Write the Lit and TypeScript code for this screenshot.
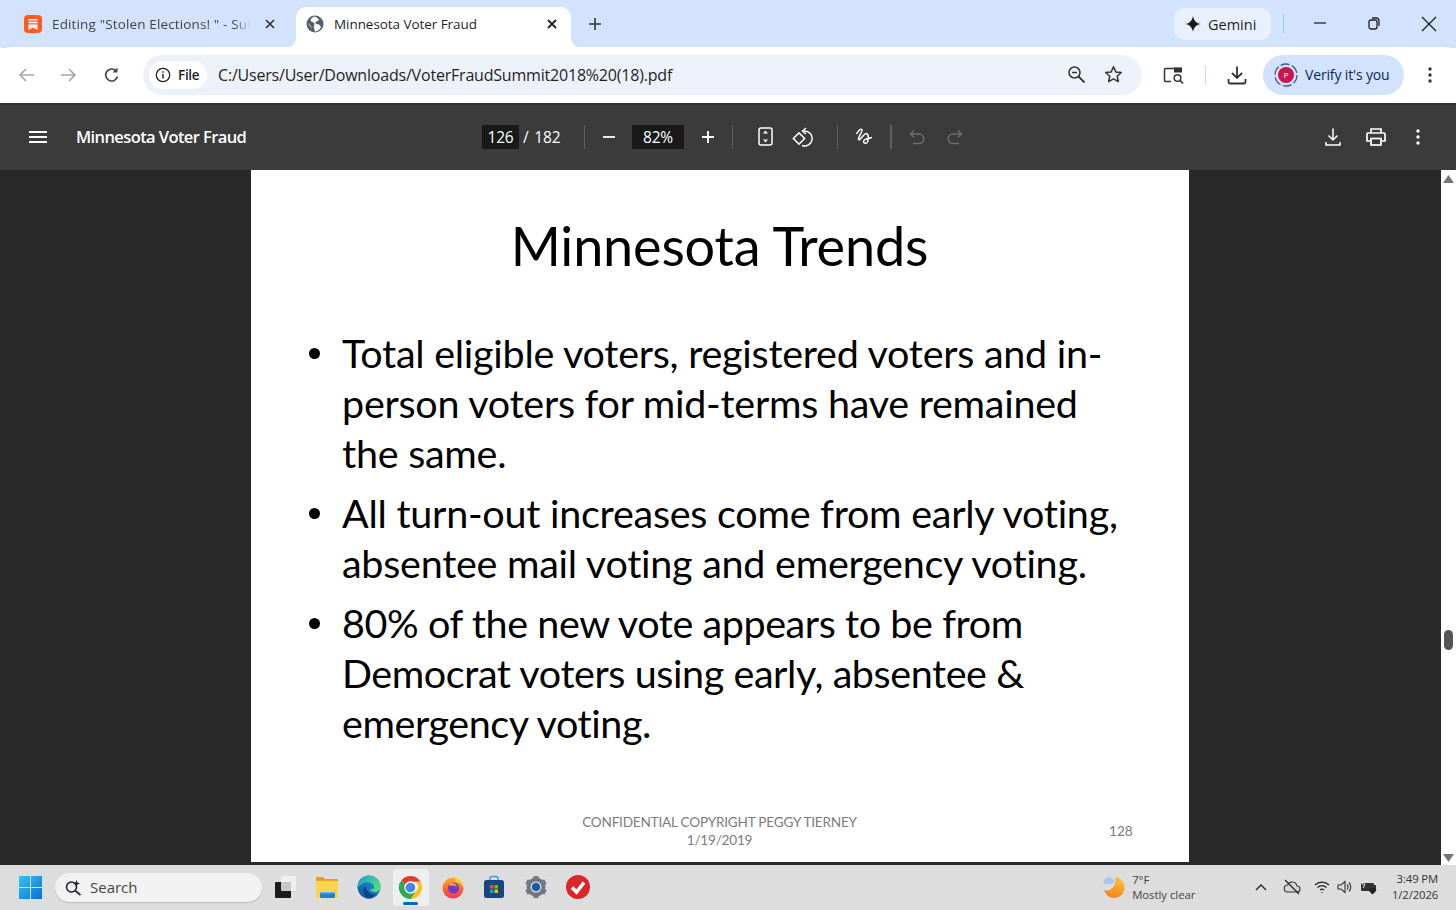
import { LitElement, html, css, svg } from "lit";
import { customElement } from "lit/decorators.js";

const ic = (w: number, h: number, body: unknown, cls = "") =>
  html`<svg class="ic ${cls}" width=${w} height=${h} viewBox="0 0 ${w} ${h}" fill="none">${body}</svg>`;

@customElement("app-root")
export class AppRoot extends LitElement {
  static styles = css`
    :host { display: flex; flex-direction: column; width: 1456px; height: 910px; overflow: hidden; font-family: "Open Sans", "Noto Sans", sans-serif; }
    .ic { display: block; flex: none; }
    .tabs { height: 48px; flex: none; background: #d3e3fd; display: flex; align-items: flex-start; }
    .tab1 { width: 296px; height: 48px; display: flex; align-items: center; padding: 0 0 0 23px; box-sizing: border-box; color: #444; font-size: 13.5px; letter-spacing: 0.14px; }
    .tab1 .t { margin-left: 9px; width: 198px; overflow: hidden; white-space: nowrap; -webkit-mask-image: linear-gradient(90deg,#000 92%,transparent); mask-image: linear-gradient(90deg,#000 92%,transparent); }
    .tab1 svg:last-child { margin-left: 13px; }
    .tab2 { margin-top: 7px; width: 275px; height: 41px; background: #fff; border-radius: 10px 10px 0 0; display: flex; align-items: center; box-sizing: border-box; padding: 0 0 7px 10px; color: #1f1f1f; font-size: 13.5px; letter-spacing: -0.06px; flex: none; position: relative; }
    .tab2::before, .tab2::after { content: ""; position: absolute; bottom: 0; width: 10px; height: 10px; }
    .tab2::before { left: -10px; background: radial-gradient(circle at 0 0, transparent 9.5px, #fff 10px); }
    .tab2::after { right: -10px; background: radial-gradient(circle at 100% 0, transparent 9.5px, #fff 10px); }
    .tab2 .t { margin-left: 10px; width: 211px; white-space: nowrap; }
    .plus { margin-left: 17px; margin-top: 17px; }
    .tabs .sp { flex: 1; }
    .gem { margin-top: 8px; width: 97px; height: 32px; background: #e9f0fd; border-radius: 10px; display: flex; align-items: center; padding-left: 10px; box-sizing: border-box; font-size: 14.5px; color: #1f1f1f; gap: 6px; letter-spacing: 0; }
    .vbar { width: 1px; height: 19px; background: #a8c7fa; margin: 14px 0 0 12px; }
    .win { display: flex; margin-top: 16px; margin-left: 29px; gap: 40px; margin-right: 19px; }
    .bar { height: 56px; flex: none; background: #fff; border-radius: 10px 10px 0 0; display: flex; align-items: center; margin-top: -1px; position: relative; }
    .nav { display: flex; align-items: center; padding-left: 18px; width: 143px; box-sizing: border-box; }
    .nav svg:nth-child(2) { margin-left: 23px; }
    .nav svg:nth-child(3) { margin-left: 26px; }
    .omni { width: 999px; height: 40px; background: #edf2fa; border-radius: 20px; display: flex; align-items: center; padding-left: 6px; box-sizing: border-box; }
    .chip { width: 58px; height: 28px; background: #fff; border-radius: 14px; display: flex; align-items: center; padding-left: 6px; gap: 7px; box-sizing: border-box; font-size: 13.5px; font-weight: 600; color: #1f1f1f; letter-spacing: -0.3px; }
    .url { margin-left: 11px; padding-bottom: 1px; font-size: 16px; color: #1f1f1f; letter-spacing: -0.2px; flex: 1; white-space: nowrap; }
    .omni .z { margin-right: 18px; margin-bottom: 2px; }
    .omni .star { margin-right: 19px; margin-bottom: 2px; }
    .bar .lens { margin-left: 21px; }
    .hbar { width: 1px; height: 19px; background: #c9daf8; margin: 1px 21px 0 21px; }
    .ver { margin-left: 16px; width: 141px; height: 40px; border-radius: 20px; background: #d3e3fd; display: flex; align-items: center; padding-left: 11px; box-sizing: border-box; font-size: 14px; color: #0b2a57; gap: 7px; letter-spacing: -0.15px; padding-bottom: 1px; }
    .bar .dots { margin-left: 24px; }
    .pdfbar { height: 67px; flex: none; background: #3b3b3b; color: #fff; display: flex; align-items: center; font-size: 16px; box-shadow: inset 0 2px 0 #333; }
    .menu { margin-left: 29px; }
    .ttl { margin-left: 29px; width: 406px; font-weight: 600; font-size: 16.5px; letter-spacing: -0.6px; white-space: nowrap; }
    .box { background: #191919; height: 24px; display: flex; align-items: center; justify-content: center; font-size: 15.5px; letter-spacing: -0.2px; }
    .pg { width: 37px; }
    .of { margin-left: 4px; font-size: 15.5px; width: 61px; letter-spacing: -0.2px; word-spacing: 2px; white-space: pre; }
    .sep { width: 1px; height: 24px; background: #5f5f5f; flex: none; }
    .zm { width: 52px; }
    .pdfbar .grp { display: flex; align-items: center; }
    .view { flex: 1; min-height: 0; background: #282828; display: flex; position: relative; }
    .page { margin-left: 251px; width: 938px; height: 692px; background: #fff; color: #000; font-family: "Lato", sans-serif; position: relative; display: flex; flex-direction: column; align-items: center; }
    .h { font-size: 54px; line-height: 66px; margin-top: 43px; letter-spacing: -0.17px; white-space: nowrap; margin-left: -1px; }
    ul { list-style: none; margin: 49px 0 0 0; padding: 0 0 0 63px; align-self: stretch; font-size: 39.5px; line-height: 50px; letter-spacing: -0.26px; }
    li { display: flex; margin-bottom: 10px; white-space: nowrap; }
    li.p3 { letter-spacing: -0.42px; }
    li::before { content: ""; width: 11px; height: 11px; border-radius: 50%; background: #000; margin: 20px 17px 0 -5px; flex: none; }
    li span { margin-left: 5px; }
    .fl { position: absolute; left: 0; right: 0; top: 643px; text-align: center; font-size: 13.6px; line-height: 18px; color: #7c7c7c; letter-spacing: -0.22px; margin-left: -1px; }
    .num { position: absolute; left: 858px; top: 652px; font-size: 13.6px; line-height: 18px; color: #7c7c7c; }
    .scroll { position: absolute; right: 0; top: 0; bottom: 0; width: 15px; background: #fff; }
    .up, .dn { position: absolute; left: 2px; }
    .up { top: 5px; } .dn { bottom: 3px; }
    .thumb { position: absolute; left: 3px; top: 460px; width: 9px; height: 20px; border-radius: 5px; background: #555; }
    .task { height: 45px; flex: none; background: #dddddd; display: flex; align-items: center; position: relative; font-family: "Open Sans", sans-serif; box-sizing: border-box; padding-bottom: 1px; }
    .start { margin-left: 19px; }
    .search { margin-left: 13px; width: 207px; height: 29px; border-radius: 15px; background: #f2f2f2; box-shadow: 0 1px 1px #bbb; display: flex; align-items: center; padding-left: 10px; gap: 8px; box-sizing: border-box; font-size: 15px; color: #444; }
    .apps { display: flex; align-items: center; margin-left: 2px; }
    .app { width: 41.9px; height: 37px; display: flex; align-items: center; justify-content: center; position: relative; }
    .app.on::before { content: ""; position: absolute; left: 3px; right: 3px; top: 0; bottom: 0; background: #efefef; border-radius: 4px; }
    .app.on svg { position: relative; }
    .app.on::after { content: ""; position: absolute; left: 13px; bottom: 1px; width: 15px; height: 3px; border-radius: 2px; background: #0067c0; }
    .wx { margin-left: 503px; }
    .wxt { margin-left: 7px; font-size: 11.3px; line-height: 15px; color: #444; width: 122px; margin-top: -1px; }
    .tray { display: flex; align-items: center; }
    .clock { margin-left: 11px; width: 50px; text-align: right; font-size: 11.3px; line-height: 15.5px; color: #333; letter-spacing: -0.1px; margin-top: -1px; }
  `;

  render() {
    const g = "#444746";
    const stroke = (d: string, c = g, w = 1.6) => svg`<path d=${d} stroke=${c} stroke-width=${w} fill="none"/>`;
    return html`
      <div class="tabs">
        <div class="tab1">
          ${ic(20, 20, svg`<rect x="1" y="1" width="18" height="18" rx="4" fill="#ff5a1f"/><path d="M5.500 5h9v1.600h-9zM5.500 7.700h9v1.600h-9zM5.500 10.400h9V16L10 13.600 5.500 16z" fill="#fff"/>`)}
          <div class="t">Editing "Stolen Elections! " - Sul</div>
          ${ic(14, 14, stroke("M3 3l8 8M11 3l-8 8", "#333", 1.7))}
        </div>
        <div class="tab2">
          ${ic(18, 18, svg`<circle cx="9" cy="9" r="8.500" fill="#5a5e63"/><path d="M8 1.500C6 3 4 4 5 6c1 1.500 3 1 3.500 2.500S7 11 8 13l1 3.500c3-.5 5-2 6-4.500l-2-2.500c-1.500-.5-3 0-3.500-1.500s1.500-1.500 3-2.500S10 1.500 8 1.500zM1.500 8l3 2.500 2 3.500" fill="#fff"/>`)}
          <div class="t">Minnesota Voter Fraud</div>
          ${ic(14, 14, stroke("M3 3l8 8M11 3l-8 8", "#222", 1.8))}
        </div>
        <div class="plus">${ic(14, 14, stroke("M7 1v12M1 7h12", "#333", 1.6))}</div>
        <div class="sp"></div>
        <div class="gem">
          ${ic(18, 18, svg`<path d="M9 1C9.600 5.500 12.500 8.400 17 9 12.500 9.600 9.600 12.500 9 17 8.400 12.500 5.500 9.600 1 9 5.500 8.400 8.400 5.500 9 1z" fill="#1a1a1a"/>`)}
          <span>Gemini</span>
        </div>
        <div class="vbar"></div>
        <div class="win">
          ${ic(14, 14, stroke("M1 7h12", "#222", 1.3))}
          ${ic(14, 14, svg`<rect x="2" y="4" width="8" height="9" rx="2" stroke="#222" stroke-width="1.300"/><path d="M5 2h4a3 3 0 0 1 3 3v5" stroke="#222" stroke-width="1.300"/>`)}
          ${ic(16, 16, stroke("M1 1l14 14M15 1L1 15", "#222", 1.4))}
        </div>
      </div>
      <div class="bar">
        <div class="nav">
          ${ic(18, 18, stroke("M16 9H2M8 3L2 9l6 6", "#a5a6a8", 1.6))}
          ${ic(18, 18, stroke("M2 9h14M10 3l6 6-6 6", "#a5a6a8", 1.6))}
          ${ic(18, 18, svg`<path d="M14.500 10.500A6 6 0 1 1 13 4.800" stroke="#444" stroke-width="1.700"/><path d="M14.500 1.500v5h-5z" fill="#444"/>`)}
        </div>
        <div class="omni">
          <div class="chip">
            ${ic(16, 16, svg`<circle cx="8" cy="8" r="6.700" stroke="#222" stroke-width="1.300"/><path d="M8 7v4.500M8 4.300v1.400" stroke="#222" stroke-width="1.500"/>`)}
            <span>File</span>
          </div>
          <div class="url">C:/Users/User/Downloads/VoterFraudSummit2018%20(18).pdf</div>
          <div class="z">${ic(19, 19, svg`<circle cx="7.500" cy="7.500" r="5.500" stroke="#333" stroke-width="1.500"/><path d="M5 7.500h5" stroke="#333" stroke-width="1.500"/><path d="M11.500 11.500l6 6" stroke="#333" stroke-width="1.800"/>`)}</div>
          <div class="star">${ic(19, 19, svg`<path d="M9.500 1.800l2.300 5.100 5.500.6-4.100 3.700 1.200 5.500-4.900-2.800-4.900 2.800 1.200-5.500L1.700 7.500l5.500-.6z" stroke="#333" stroke-width="1.500" stroke-linejoin="round"/>`)}</div>
        </div>
        <div class="lens" style="margin-left:21px">${ic(21, 19, svg`<path d="M8 15.500H2.500a1 1 0 0 1-1-1V3.500a1 1 0 0 1 1-1H18.500" stroke="#333" stroke-width="1.500"/><rect x="11" y="1.500" width="8" height="5" fill="#333"/><circle cx="14.500" cy="12" r="3.300" stroke="#333" stroke-width="1.500"/><path d="M17 14.500l3 3" stroke="#333" stroke-width="1.700"/>`)}</div>
        <div class="hbar"></div>
        ${ic(20, 20, svg`<path d="M10 1.500v11M5 8l5 5 5-5" stroke="#333" stroke-width="1.800"/><path d="M1.500 14v3a1.500 1.500 0 0 0 1.500 1.500h14a1.500 1.500 0 0 0 1.500-1.500v-3" stroke="#333" stroke-width="1.800"/>`)}
        <div class="ver">
          ${ic(24, 24, svg`<circle cx="12" cy="12" r="11" stroke="#3b5a8f" stroke-width="1.300" stroke-dasharray="9 2.500"/><circle cx="12" cy="12" r="8" fill="#c8174f"/><text x="12" y="15" text-anchor="middle" font-size="8" fill="#fff" font-family="Open Sans">P</text>`)}
          <span>Verify it's you</span>
        </div>
        <div class="dots">${ic(4, 16, svg`<circle cx="2" cy="2" r="1.700" fill="#333"/><circle cx="2" cy="8" r="1.700" fill="#333"/><circle cx="2" cy="14" r="1.700" fill="#333"/>`)}</div>
      </div>
      <div class="pdfbar">
        <div class="menu">${ic(18, 12, stroke("M0 1h18M0 6h18M0 11h18", "#fff", 1.8))}</div>
        <div class="ttl">Minnesota Voter Fraud</div>
        <div class="box pg">126</div>
        <div class="of">/ 182</div>
        <div class="sep"></div>
        <div class="grp" style="margin-left:17px">${ic(14, 14, stroke("M1 7h12", "#fff", 1.8))}</div>
        <div class="box zm" style="margin-left:16px">82%</div>
        <div class="grp" style="margin-left:17px">${ic(14, 14, stroke("M1 7h12M7 1v12", "#fff", 1.8))}</div>
        <div class="sep" style="margin-left:17px"></div>
        <div class="grp" style="margin-left:25px">${ic(15, 19, svg`<rect x="1" y="1" width="13" height="17" rx="2" stroke="#fff" stroke-width="1.500"/><path d="M7.500 3.500l-2.500 3h5zM7.500 15.500l-2.500-3h5z" fill="#fff"/>`)}</div>
        <div class="grp" style="margin-left:19px">${ic(22, 20, svg`<rect x="3" y="7.500" width="8" height="8" transform="rotate(45 7 11.500)" stroke="#fff" stroke-width="1.500"/><path d="M10 18.500a7.500 7.500 0 1 0 2-14.500" stroke="#fff" stroke-width="1.500"/><path d="M14 1l-3.500 3 3.500 3" stroke="#fff" stroke-width="1.500"/>`)}</div>
        <div class="sep" style="margin-left:23px"></div>
        <div class="grp" style="margin-left:17px">${ic(18, 18, stroke("M1.500 6C3 3 5.500.5 7 1.500 8.500 3 2.500 9 3.500 11.500 4.500 13.500 9 5 11.500 5.500 13.500 6 14 11 12.500 14 11.500 16 8.500 15.500 8.500 13.500 8.500 11 13 10.500 17 9.500", "#fff", 1.5))}</div>
        <div class="sep" style="margin-left:17px;width:2px"></div>
        <div class="grp" style="margin-left:17px">${ic(16, 16, stroke("M5 1.500L1.500 5 5 8.500M2 5h8a4.500 4.500 0 0 1 0 9.500H4", "#6f6f6f", 1.5))}</div>
        <div class="grp" style="margin-left:22px">${ic(16, 16, stroke("M11 1.500L14.500 5 11 8.500M14 5H6a4.500 4.500 0 0 0 0 9.500h6", "#6f6f6f", 1.5))}</div>
        <div style="flex:1"></div>
        <div class="grp">${ic(16, 19, svg`<path d="M8 1.500v11M3.500 8.500L8 13l4.500-4.500" stroke="#fff" stroke-width="1.500"/><path d="M1 15v3h14v-3" stroke="#fff" stroke-width="1.500"/>`)}</div>
        <div class="grp" style="margin-left:25px">${ic(20, 18, svg`<path d="M5 5V1h10v4M5 13H1V6a1 1 0 0 1 1-1h16a1 1 0 0 1 1 1v7h-4" stroke="#fff" stroke-width="1.700"/><rect x="5" y="10.500" width="10" height="6.500" stroke="#fff" stroke-width="1.700"/>`)}</div>
        <div class="grp" style="margin-left:30px;margin-right:36px">${ic(4, 16, svg`<circle cx="2" cy="2" r="1.700" fill="#fff"/><circle cx="2" cy="8" r="1.700" fill="#fff"/><circle cx="2" cy="14" r="1.700" fill="#fff"/>`)}</div>
      </div>
      <div class="view">
        <div class="page">
          <div class="h">Minnesota Trends</div>
          <ul>
            <li><span>Total eligible voters, registered voters and in-<br>person voters for mid-terms have remained<br>the same.</span></li>
            <li><span>All turn-out increases come from early voting,<br>absentee mail voting and emergency voting.</span></li>
            <li class="p3"><span>80% of the new vote appears to be from<br>Democrat voters using early, absentee &amp;<br>emergency voting.</span></li>
          </ul>
          <div class="fl">CONFIDENTIAL COPYRIGHT PEGGY TIERNEY<br>1/19/2019</div>
          <div class="num">128</div>
        </div>
        <div class="scroll">
          <div class="up">${ic(11, 8, svg`<path d="M5.500 0L11 8H0z" fill="#777"/>`)}</div>
          <div class="thumb"></div>
          <div class="dn">${ic(11, 8, svg`<path d="M5.500 8L11 0H0z" fill="#777"/>`)}</div>
        </div>
      </div>
      <div class="task">
        <div class="start">${ic(23, 23, svg`<defs><linearGradient id="w" x1="0" y1="0" x2="1" y2="1"><stop offset="0" stop-color="#35c4f5"/><stop offset="1" stop-color="#0a6fd1"/></linearGradient></defs><path d="M0 0h11v11H0zM12 0h11v11H12zM0 12h11v11H0zM12 12h11v11H12z" fill="url(#w)"/>`)}</div>
        <div class="search">
          ${ic(17, 17, svg`<circle cx="6.500" cy="8" r="5" stroke="#1d1d2b" stroke-width="1.500"/><path d="M10 11.500l5.500 4.500" stroke="#3a1d3f" stroke-width="1.700"/><path d="M11.500 1l.9 2.600 2.600.9-2.600.9-.9 2.600-.9-2.600L8 4.500l2.600-.9z" fill="#1d1d2b"/>`)}
          <span>Search</span>
        </div>
        <div class="apps">
          <div class="app">${ic(24, 24, svg`<rect x="2" y="7" width="16" height="16" rx="1" fill="#1b1b1b"/><rect x="8" y="1" width="15" height="15" rx="1" fill="#f4f4f4" fill-opacity=".8"/>`)}</div>
          <div class="app">${ic(26, 24, svg`<path d="M2 3a1 1 0 0 1 1-1h6l2 2h12a1 1 0 0 1 1 1v3H2z" fill="#e0a11c"/><path d="M2 6h22v16a1 1 0 0 1-1 1H3a1 1 0 0 1-1-1z" fill="#fcd34d"/><rect x="6" y="17" width="15" height="6" rx="1" fill="#1e82d2"/><rect x="6" y="17" width="15" height="1.500" fill="#5cb3ee"/>`)}</div>
          <div class="app">${ic(24, 24, svg`<defs><linearGradient id="e1" x1="0" y1="1" x2="1" y2="0"><stop offset="0" stop-color="#0b4f96"/><stop offset="1" stop-color="#2aa4e0"/></linearGradient><linearGradient id="e2" x1="0" y1="0" x2="1" y2="0.600"><stop offset="0" stop-color="#1d9be0"/><stop offset="1" stop-color="#52dc7a"/></linearGradient></defs><circle cx="12" cy="12" r="11.500" fill="url(#e1)"/><path d="M12 .5A11.500 11.500 0 0 1 23.500 12c0 3.500-3 5-5.500 5-3 0-5-1-6-2.500.5 0 3 .5 4.500-1 1-1.500.5-4-2-5.500-4-2-10-.5-14 5C1 6 6 .5 12 .5z" fill="url(#e2)"/><path d="M9 12c0 3 2.500 6 6 7 1.500.5 3 .5 4 0-2 2.500-5 4.500-8 4.500C8 23.500 6 18 6.500 14 7 12.500 8 11.500 9 12z" fill="#0a4687"/>`)}</div>
          <div class="app on">${ic(25, 25, svg`<path d="M12.500 1a11.500 11.500 0 0 1 10 5.800H12.500a5.700 5.700 0 0 0-5.400 3.900L3.700 5A11.500 11.500 0 0 1 12.500 1z" fill="#e33b2e"/><path d="M22.500 6.800A11.500 11.500 0 0 1 13 24l4.400-7.500a5.700 5.700 0 0 0 0-9.700z" fill="#fbc116"/><path d="M13 24A11.500 11.500 0 0 1 3.700 5l5 8.500a5.700 5.700 0 0 0 8.700 3z" fill="#2da94f"/><circle cx="12.500" cy="12.500" r="4.800" fill="#4285f4"/><circle cx="12.500" cy="12.500" r="5.600" stroke="#fff" stroke-width="1.200"/>`)}</div>
          <div class="app">${ic(24, 24, svg`<defs><linearGradient id="ff" x1="0.500" y1="0" x2="0.500" y2="1"><stop offset="0" stop-color="#fdb22a"/><stop offset=".6" stop-color="#f9612f"/><stop offset="1" stop-color="#f0356b"/></linearGradient></defs><circle cx="12" cy="13" r="10.500" fill="url(#ff)"/><path d="M15 0c0 3 3 4 5 6.500 1.500 2 2.500 4 2.500 6.500-2-4-5-6.500-9-6.500C14 5 15 3 15 0z" fill="#ffd43b"/><circle cx="12.500" cy="13" r="5.500" fill="#7039c9"/><path d="M8 9c3-2 7-1 8 3-2-1.500-5-2-7-1z" fill="#f8a13a"/>`)}</div>
          <div class="app">${ic(20, 24, svg`<path d="M6 6V3.500a2 2 0 0 1 2-2h4a2 2 0 0 1 2 2V6" stroke="#2d9fd8" stroke-width="1.500"/><rect x="0" y="5" width="20" height="18" rx="2.500" fill="#17477c"/><path d="M6 10h3.500v3.500H6z" fill="#f25022"/><path d="M10.500 10H14v3.500h-3.500z" fill="#7fba00"/><path d="M6 14.500h3.500V18H6z" fill="#00a4ef"/><path d="M10.500 14.500H14V18h-3.500z" fill="#ffb900"/>`)}</div>
          <div class="app">${ic(24, 24, svg`<circle cx="12" cy="12" r="7" stroke="#6f7780" stroke-width="5"/><path d="M12 1v3M12 20v3M2.500 6.500l2.600 1.500M18.900 16l2.600 1.500M2.500 17.500l2.600-1.500M18.900 8l2.600-1.500" stroke="#6f7780" stroke-width="5"/><circle cx="12" cy="12" r="5.500" fill="#e4e6e8"/><circle cx="12" cy="12" r="4.300" fill="#1c5aa8"/>`)}</div>
          <div class="app">${ic(24, 24, svg`<circle cx="12" cy="12" r="12" fill="#d92727"/><path d="M6 12.500l4.500 4.500L18 7.500" stroke="#fff" stroke-width="3.500"/>`)}</div>
        </div>
        <div class="wx">${ic(23, 23, svg`<defs><linearGradient id="m" x1="0.600" y1="0" x2="0.300" y2="1"><stop offset="0" stop-color="#fcc33a"/><stop offset="1" stop-color="#f2811b"/></linearGradient></defs><path d="M13 1a10.500 10.500 0 1 1-11 13c6 2 13-3 11-13z" fill="url(#m)"/><path d="M3 8a3 3 0 0 1 1-5.500 4 4 0 0 1 7 1A2.500 2.500 0 0 1 11 8z" fill="#a9c9ec"/>`)}</div>
        <div class="wxt">7°F<br>Mostly clear</div>
        <div class="tray">
          ${ic(14, 9, stroke("M2 7l5-5 5 5", "#222", 1.3))}
          <span style="width:15px"></span>
          ${ic(18, 16, svg`<path d="M5 13a3.500 3.500 0 0 1-.5-7A5 5 0 0 1 14 7a3 3 0 0 1 0 6z" fill="#d6d6d6" stroke="#333" stroke-width="1.100"/><path d="M2 1l14 14" stroke="#222" stroke-width="1.300"/>`)}
          <span style="width:13px"></span>
          ${ic(16, 14, stroke("M1 5a10 10 0 0 1 14 0M3.500 7.500a6.500 6.500 0 0 1 9 0M6 10a3 3 0 0 1 4 0M7.500 12.500h1", "#222", 1.2))}
          <span style="width:7px"></span>
          ${ic(16, 14, svg`<path d="M1 5h3l4-3.500v11L4 9H1z" stroke="#333" stroke-width="1.100"/><path d="M10 4.500a3.500 3.500 0 0 1 0 5M12 2.500a6.500 6.500 0 0 1 0 9" stroke="#333" stroke-width="1.100"/>`)}
          <span style="width:7px"></span>
          ${ic(17, 16, svg`<rect x="1" y="4" width="13" height="8" rx="1" fill="#333"/><path d="M14 6h2v4h-2z" fill="#333"/><path d="M4 1l-2 4h3l-2 4" stroke="#ddd" stroke-width="1"/><path d="M12.500 15.500l-3.500-3.500a2 2 0 0 1 3.500-2 2 2 0 0 1 3.500 2z" fill="#222"/>`)}
        </div>
        <div class="clock">3:49 PM<br>1/2/2026</div>
      </div>
    `;
  }
}
